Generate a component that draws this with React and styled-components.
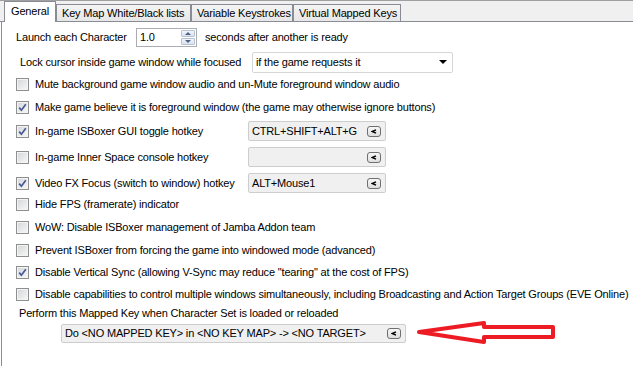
import React from 'react';
import styled, { createGlobalStyle } from 'styled-components';

const GlobalStyle = createGlobalStyle`
  html, body {
    margin: 0;
    padding: 0;
    background: #fff;
  }
  body {
    font-family: "Liberation Sans", Arial, sans-serif;
    font-size: 11px;
    letter-spacing: -0.17px;
    color: #000;
    overflow: hidden;
  }
`;

const Window = styled.div`
  width: 633px;
  height: 366px;
  display: flex;
  flex-direction: column;
  background: #fff;
  overflow: hidden;
`;

const TabStrip = styled.div`
  height: 20px;
  background: #f0f0f0;
  border-top: 1px solid #a0a0a0;
  border-bottom: 1px solid #898c95;
  display: flex;
  align-items: flex-end;
  padding-left: 4px;
`;

const Tab = styled.div`
  box-sizing: border-box;
  width: ${p => p.$w}px;
  height: ${p => (p.$active ? 21 : 17)}px;
  margin-bottom: ${p => (p.$active ? -1 : 0)}px;
  padding-left: ${p => (p.$active ? 6 : 5)}px;
  padding-bottom: ${p => (p.$active ? 2 : 0)}px;
  display: flex;
  align-items: center;
  white-space: nowrap;
  border: 1px solid #898c95;
  border-bottom: none;
  background: ${p => (p.$active ? '#fff' : 'linear-gradient(#f4f4f4, #e7e7e7)')};
  position: relative;
  z-index: ${p => (p.$active ? 1 : 0)};
`;

const Panel = styled.div`
  flex: 1;
  margin-left: 1px;
  border-left: 1px solid #898c95;
  padding-left: 14px;
  display: flex;
  flex-direction: column;
`;

const Row = styled.div`
  display: flex;
  align-items: center;
  height: ${p => p.$h || 20}px;
  margin-top: ${p => p.$mt || 0}px;
  padding-left: ${p => p.$indent || 0}px;
  white-space: nowrap;
`;

const FixedLabel = styled.span`
  width: ${p => p.$w}px;
  flex-shrink: 0;
`;

const Spinner = styled.div`
  box-sizing: border-box;
  width: 61px;
  height: 19px;
  border: 1px solid #abadb3;
  background: #fff;
  display: flex;
  margin-right: 8px;
`;

const SpinValue = styled.div`
  flex: 1;
  padding-left: 3px;
  display: flex;
  align-items: center;
`;

const SpinButtons = styled.div`
  width: 14px;
  display: flex;
  flex-direction: column;
  padding: 1px;
  gap: 1px;
`;

const SpinButton = styled.div`
  flex: 1;
  border: 1px solid #b7c3d3;
  border-radius: 1px;
  background: linear-gradient(#f1f5fa, #d8e3f0);
  display: flex;
  align-items: center;
  justify-content: center;
`;

const Triangle = styled.span`
  width: 0;
  height: 0;
  border-left: 3px solid transparent;
  border-right: 3px solid transparent;
  ${p => (p.$up ? 'border-bottom' : 'border-top')}: 3px solid ${p => p.$color || '#4d6185'};
`;

const Select = styled.div`
  box-sizing: border-box;
  width: 201px;
  height: 21px;
  border: 1px solid #d6d6d6;
  border-radius: 2px;
  background: #fff;
  display: flex;
  align-items: center;
  justify-content: space-between;
  padding: 0 5px 0 3px;
`;

const SelectArrow = styled.span`
  width: 0;
  height: 0;
  border-left: 4px solid transparent;
  border-right: 4px solid transparent;
  border-top: 4px solid #000;
`;

const Box = styled.span`
  box-sizing: border-box;
  width: 13px;
  height: 13px;
  flex-shrink: 0;
  border: 1px solid #8e8f8f;
  box-shadow: inset 0 0 0 1px #f4f4f4;
  background: linear-gradient(135deg, #d3d5d9 0%, #eeeeee 70%, #f7f7f7 100%);
  margin-right: 6px;
  display: flex;
  align-items: center;
  justify-content: center;
`;

const KeyField = styled.div`
  box-sizing: border-box;
  width: ${p => p.$w}px;
  height: ${p => p.$h || 20}px;
  border: 1px solid #cdcdcd;
  border-radius: 2px;
  background: #f0f0f0;
  display: flex;
  align-items: center;
  justify-content: space-between;
  padding: 0 4px 0 3px;
`;

const MiniButton = styled.span`
  box-sizing: border-box;
  width: 14px;
  height: 11px;
  border: 1px solid #6f6f6f;
  border-radius: 3px;
  background: linear-gradient(#f6f6f6, #dedede);
  display: flex;
  align-items: center;
  justify-content: center;
`;

const Arrow = styled.svg`
  margin-left: 10px;
  flex-shrink: 0;
`;

const Check = ({ checked }) => (
  <Box>
    {checked && (
      <svg width="9" height="9" viewBox="0 0 9 9">
        <path d="M1.2 4.6 L3.4 7.2 L7.8 1.2" fill="none" stroke="#43599a" strokeWidth="1.7" />
      </svg>
    )}
  </Box>
);

const Pick = () => (
  <MiniButton>
    <svg width="6" height="5" viewBox="0 0 6 5">
      <path d="M5 0.8 L1.3 2.5 L5 4.2" fill="none" stroke="#000" strokeWidth="1.4" />
    </svg>
  </MiniButton>
);

const CheckRow = ({ mt, checked, children }) => (
  <Row $mt={mt}>
    <Check checked={checked} />
    <span>{children}</span>
  </Row>
);

const HotkeyRow = ({ mt, checked, label, value }) => (
  <Row $mt={mt}>
    <Check checked={checked} />
    <FixedLabel $w={213}>{label}</FixedLabel>
    <KeyField $w={138}>
      <span>{value}</span>
      <Pick />
    </KeyField>
  </Row>
);

const tabs = [
  { name: 'General', w: 52, active: true },
  { name: 'Key Map White/Black lists', w: 135 },
  { name: 'Variable Keystrokes', w: 102 },
  { name: 'Virtual Mapped Keys', w: 108 },
];

export default function App() {
  return (
    <Window>
      <GlobalStyle />
      <TabStrip>
        {tabs.map(t => (
          <Tab key={t.name} $w={t.w} $active={t.active}>{t.name}</Tab>
        ))}
      </TabStrip>
      <Panel>
        <Row $mt={5}>
          <FixedLabel $w={120}>Launch each Character</FixedLabel>
          <Spinner>
            <SpinValue>1.0</SpinValue>
            <SpinButtons>
              <SpinButton><Triangle $up /></SpinButton>
              <SpinButton><Triangle /></SpinButton>
            </SpinButtons>
          </Spinner>
          <span>seconds after another is ready</span>
        </Row>
        <Row $mt={5} $indent={4}>
          <FixedLabel $w={232}>Lock cursor inside game window while focused</FixedLabel>
          <Select>
            <span>if the game requests it</span>
            <SelectArrow />
          </Select>
        </Row>
        <CheckRow mt={2}>Mute background game window audio and un-Mute foreground window audio</CheckRow>
        <CheckRow mt={3} checked>Make game believe it is foreground window (the game may otherwise ignore buttons)</CheckRow>
        <HotkeyRow mt={4} checked label="In-game ISBoxer GUI toggle hotkey" value="CTRL+SHIFT+ALT+G" />
        <HotkeyRow mt={6} label="In-game Inner Space console hotkey" value="" />
        <HotkeyRow mt={6} checked label="Video FX Focus (switch to window) hotkey" value="ALT+Mouse1" />
        <CheckRow mt={1}>Hide FPS (framerate) indicator</CheckRow>
        <CheckRow mt={3}>WoW: Disable ISBoxer management of Jamba Addon team</CheckRow>
        <CheckRow mt={3}>Prevent ISBoxer from forcing the game into windowed mode (advanced)</CheckRow>
        <CheckRow mt={2} checked>Disable Vertical Sync (allowing V-Sync may reduce "tearing" at the cost of FPS)</CheckRow>
        <CheckRow mt={2}>Disable capabilities to control multiple windows simultaneously, including Broadcasting and Action Target Groups (EVE Online)</CheckRow>
        <Row $mt={2} $h={14} $indent={3}>Perform this Mapped Key when Character Set is loaded or reloaded</Row>
        <Row $mt={1} $h={24} $indent={45}>
          <KeyField $w={345} $h={19}>
            <span>Do &lt;NO MAPPED KEY&gt; in &lt;NO KEY MAP&gt; -&gt; &lt;NO TARGET&gt;</span>
            <Pick />
          </KeyField>
          <Arrow width="142" height="24" viewBox="0 0 142 24">
            <polygon
              points="3,11 68,2 68,6 137,6 137,16 68,16 68,21"
              fill="none"
              stroke="#ed1c24"
              strokeWidth="4"
              strokeLinejoin="round"
            />
          </Arrow>
        </Row>
      </Panel>
    </Window>
  );
}
